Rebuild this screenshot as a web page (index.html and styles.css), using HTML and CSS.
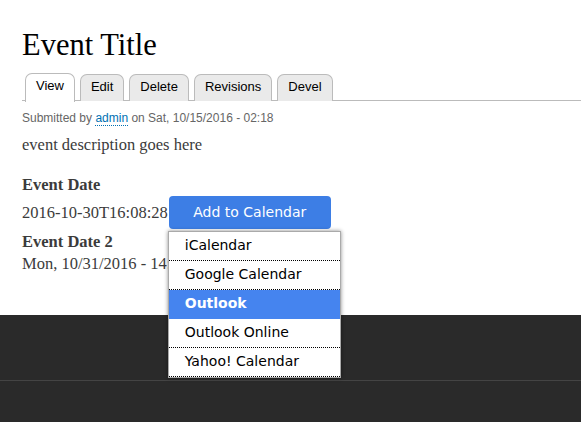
FILE: index.html
```html
<!DOCTYPE html>
<html>
<head>
<meta charset="utf-8">
<link rel="stylesheet" href="styles.css">
</head>
<body>
<main class="main">
  <h1 class="title">Event Title</h1>
  <ul class="tabs">
    <li class="tab active">View</li>
    <li class="tab">Edit</li>
    <li class="tab">Delete</li>
    <li class="tab">Revisions</li>
    <li class="tab">Devel</li>
  </ul>
  <div class="meta">Submitted by <a class="user" href="#">admin</a> on Sat, 10/15/2016 - 02:18</div>
  <p class="body">event description goes here</p>
  <div class="field">
    <div class="label">Event Date</div>
    <div class="value row">
      <span>2016-10-30T16:08:28</span>
      <div class="atc">
        <span class="atc-btn">Add to Calendar</span>
        <ul class="atc-menu">
          <li class="atc-item">iCalendar</li>
          <li class="atc-item">Google Calendar</li>
          <li class="atc-item hover">Outlook</li>
          <li class="atc-item">Outlook Online</li>
          <li class="atc-item">Yahoo! Calendar</li>
        </ul>
      </div>
    </div>
  </div>
  <div class="field second">
    <div class="label">Event Date 2</div>
    <div class="value">Mon, 10/31/2016 - 14:00</div>
  </div>
</main>
<footer class="footer">
  <div class="footer-top"></div>
  <div class="footer-bottom"></div>
</footer>
</body>
</html>
```
FILE: styles.css
```css
html, body { margin: 0; padding: 0; }
body { background: #fff; color: #3b3b3b; font-family: "Liberation Serif", Georgia, serif; }
.main { height: 315px; padding: 0 0 0 22px; box-sizing: border-box; position: relative; z-index: 2; }
.title { margin: 0; padding-top: 28px; font-size: 30.5px; font-weight: normal; line-height: 34px; color: #000; }
.tabs { list-style: none; margin: 11px 0 0 0; padding: 0 0 0 3px; display: flex; gap: 5px; border-bottom: 1px solid #bbb; height: 27px; }
.tab { font-family: "Liberation Sans", Arial, sans-serif; font-size: 13px; color: #000; background: #eaeaea; border: 1px solid #bbb; border-bottom: none; border-radius: 7px 7px 0 0; padding: 0 10px; height: 26px; line-height: 23px; margin-top: 1px; }
.tab.active { background: #fff; height: 28px; margin-top: 0; line-height: 24px; }
.meta { font-family: "Liberation Sans", Arial, sans-serif; font-size: 12px; color: #666; margin-top: 10px; line-height: 14px; }
.user { color: #0071b3; text-decoration: none; border-bottom: 1px dotted #0071b3; }
.body { margin: 10px 0 0 0; font-size: 16.5px; line-height: 20px; }
.field { margin-top: 20px; font-size: 16.5px; }
.field.second { margin-top: 3px; }
.label { font-weight: bold; line-height: 20px; }
.second .label { line-height: 20px; }
.second .value { line-height: 24px; }
.row { display: flex; align-items: center; margin-top: 1px; height: 33px; }
.atc { position: relative; margin-left: 1px; }
.atc-btn { display: block; background: #3d7ee5; color: #fff; font-family: "DejaVu Sans", Verdana, sans-serif; font-size: 14px; border-radius: 4px; width: 162px; height: 33px; line-height: 33px; text-align: center; }
.atc-menu { position: absolute; left: -1px; top: 35px; margin: 0; padding: 0; list-style: none; width: 171px; background: #fff; border: 1px solid #aaa; box-shadow: 0 0 4px rgba(0,0,0,0.45); font-family: "DejaVu Sans", Verdana, sans-serif; font-size: 14px; color: #000; }
.atc-item { height: 28px; line-height: 27px; padding-left: 16px; border-bottom: 1px dotted #000; }
.atc-item.hover { background: #4584ef; color: #fff; font-weight: bold; border-bottom: 1px solid #4584ef; }
.footer { background: #2a2a2a; height: 107px; }
.footer-top { height: 65px; border-bottom: 1px solid #444; }
```
